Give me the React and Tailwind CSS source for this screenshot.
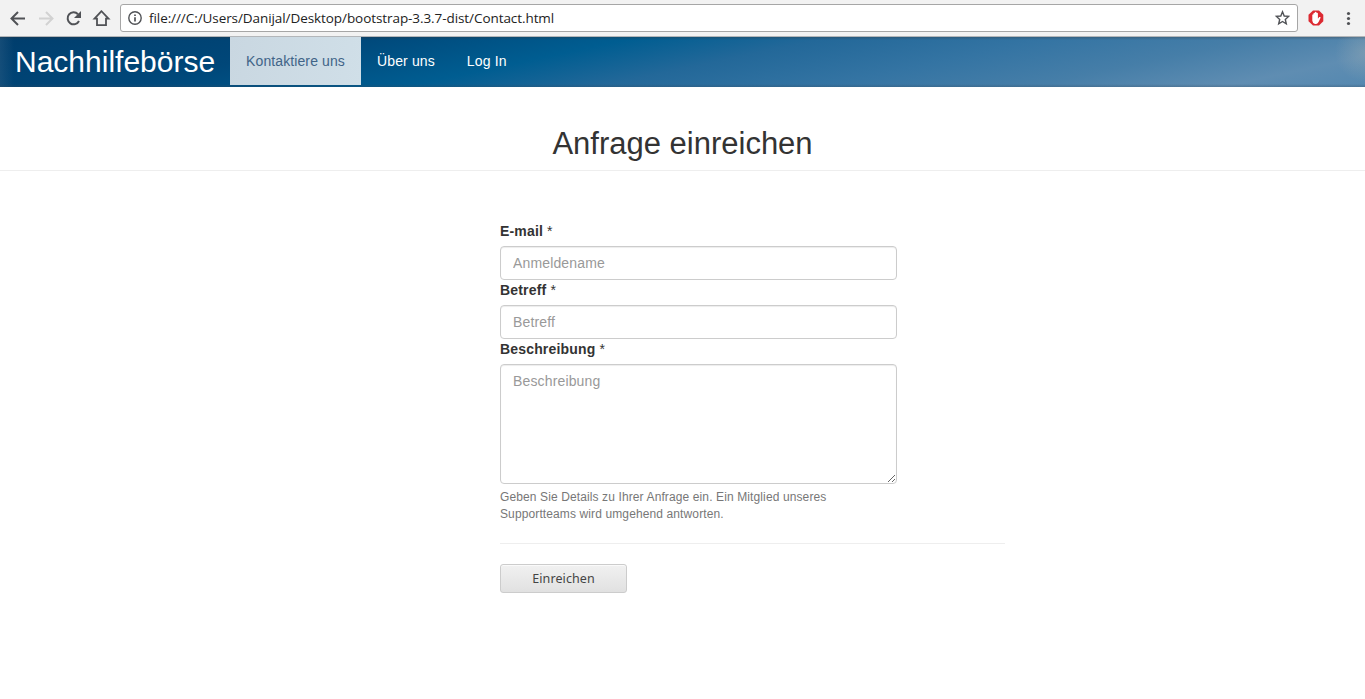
import React from "react";

function BrowserBar() {
  return (
    <header className="flex h-[37px] w-full items-start border-b border-[#b3b6b9] bg-[#f2f2f2] text-[#505256]">
      <div className="flex h-9 w-[120px] shrink-0 items-center gap-[7px] pl-[7px]">
        <svg className="size-[21px] shrink-0" viewBox="0 0 21 21" fill="none" stroke="currentColor" strokeWidth="2">
          <path d="M18 10.5H5M11 4L4.5 10.5L11 17" />
        </svg>
        <svg className="size-[21px] shrink-0 text-[#d2d2d2]" viewBox="0 0 21 21" fill="none" stroke="currentColor" strokeWidth="2">
          <path d="M4 10.5H17M11 4L17.5 10.5L11 17" />
        </svg>
        <svg className="size-[21px] shrink-0" viewBox="0 0 21 21">
          <path d="M16 13A6 6 0 1 1 15 6.2" fill="none" stroke="currentColor" strokeWidth="2" />
          <path d="M18 3V10H11Z" fill="currentColor" />
        </svg>
        <svg className="size-[21px] shrink-0" viewBox="0 0 21 21" fill="none" stroke="currentColor" strokeWidth="1.8">
          <path d="M10.5 3.2L3.5 10.6H6V17.2H15V10.6H17.5Z" />
        </svg>
      </div>
      <div className="mt-1 flex h-7 w-[1178px] shrink-0 items-center rounded-[3px] border border-[#a6a6a6] bg-white pr-[7px] pl-[7px]">
        <svg className="size-[14px] shrink-0" viewBox="0 0 14 14" fill="none" stroke="currentColor">
          <circle cx="7" cy="7" r="6.2" strokeWidth="1.4" />
          <path d="M7 6.2V10.5M7 3.4V5" strokeWidth="1.7" />
        </svg>
        <span className="ml-[7px] flex-1 font-['Open_Sans',sans-serif] text-[13.5px] leading-5 tracking-[-0.075px] whitespace-nowrap text-[#222]">
          file:///C:/Users/Danijal/Desktop/bootstrap-3.3.7-dist/Contact.html
        </span>
        <svg className="size-4 shrink-0" viewBox="0 0 16 16" fill="none" stroke="currentColor" strokeWidth="1.4">
          <path d="M8.5 1.8L10.2 6L14.6 6.4L11.3 9.4L12.3 13.8L8.5 11.5L4.7 13.8L5.7 9.4L2.4 6.4L6.8 6Z" />
        </svg>
      </div>
      <svg className="mt-[10px] ml-[10px] size-4 shrink-0" viewBox="0 0 16 16">
        <path d="M5 .4H11L15.3 4.8V11.2L11 15.6H5L.5 11.2V4.8Z" fill="#dc2a32" />
        <path d="M4.3 5Q4.7 4 5.5 4.4V3.3Q6.1 2.4 6.9 3V2.2Q7.7 1.4 8.5 2.2V2.9Q9.3 2.3 9.9 3.2V8.7L11.2 7.1Q12.4 6.5 12.7 7.6L10.7 11.8Q9.8 13.9 8.2 14H7Q4.6 13.5 4.3 10.8Z" fill="#fff" />
      </svg>
      <svg className="mt-[10px] ml-[16px] size-4 shrink-0" viewBox="0 0 16 16" fill="currentColor">
        <circle cx="8.5" cy="3.5" r="1.6" />
        <circle cx="8.5" cy="8.5" r="1.6" />
        <circle cx="8.5" cy="13.5" r="1.6" />
      </svg>
    </header>
  );
}

function NavBar() {
  return (
    <nav className="flex h-[50px] w-full items-start bg-[radial-gradient(ellipse_30px_30px_at_100%_30%,rgba(150,170,180,0.45),transparent),linear-gradient(rgba(50,50,50,0.3),transparent_3px,transparent_47px,rgba(50,70,90,0.3)),linear-gradient(90deg,rgba(40,90,130,0.5),transparent_14px),linear-gradient(168deg,#003d6c_0%,#004779_22%,#005d91_40%,#236899_52%,#3474a3_66%,#467ea8_79%,#5f8db2_91%,#5488b0_100%)] text-sm leading-5 text-white">
      <a className="w-[230px] pl-[15px] text-[30px] leading-[49px] whitespace-nowrap">Nachhilfebörse</a>
      <a className="flex h-12 w-[131px] items-center justify-center bg-[linear-gradient(100deg,#c9d7e1,#d0dfe8)] tracking-[0.1px] text-[#416488]">Kontaktiere uns</a>
      <a className="flex h-12 items-center px-4 tracking-[0.13px]">Über uns</a>
      <a className="flex h-12 items-center px-4 tracking-[0.13px]">Log In</a>
    </nav>
  );
}

function Field({ label, children }) {
  return (
    <div className="w-[397px]">
      <label className="mb-[5px] block h-5 font-bold tracking-[0.17px]">
        {label} <span className="font-normal">*</span>
      </label>
      {children}
    </div>
  );
}

const control =
  "block w-full rounded border border-[#ccc] bg-white px-3 py-1.5 text-sm leading-5 tracking-[0.15px] text-[#555] shadow-[inset_0_1px_1px_rgba(0,0,0,0.075)] outline-none placeholder:text-[#999]";

export default function App() {
  return (
    <div className="h-[699px] w-full overflow-hidden bg-white font-['Liberation_Sans',Arial,sans-serif] text-sm leading-5 text-[#333]">
      <BrowserBar />
      <NavBar />
      <h1 className="h-[84px] border-b border-[#eee] pt-10 text-center text-[31px] leading-[33px]">Anfrage einreichen</h1>
      <form className="ml-[500px] w-[505px] pt-[50px]">
        <Field label="E-mail">
          <input className={`${control} h-[34px]`} placeholder="Anmeldename" />
        </Field>
        <Field label="Betreff">
          <input className={`${control} h-[34px]`} placeholder="Betreff" />
        </Field>
        <Field label="Beschreibung">
          <textarea className={`${control} h-[120px] resize`} placeholder="Beschreibung" />
        </Field>
        <p className="mt-[5px] w-[397px] text-xs leading-[17px] tracking-[0.115px] text-[#777]">
          Geben Sie Details zu Ihrer Anfrage ein. Ein Mitglied unseres
          <br />
          Supportteams wird umgehend antworten.
        </p>
        <hr className="mt-5 mb-5 border-t border-[#eee]" />
        <button
          type="button"
          className="block h-[29px] w-[127px] rounded-[3px] border border-[#ccc] bg-linear-to-b from-[#f1f1f1] to-[#e1e1e1] font-['Noto_Sans',sans-serif] text-[12.5px] leading-[27px] tracking-[0.1px] text-[#444] shadow-[inset_0_1px_0_#fafafa]"
        >
          Einreichen
        </button>
      </form>
    </div>
  );
}
